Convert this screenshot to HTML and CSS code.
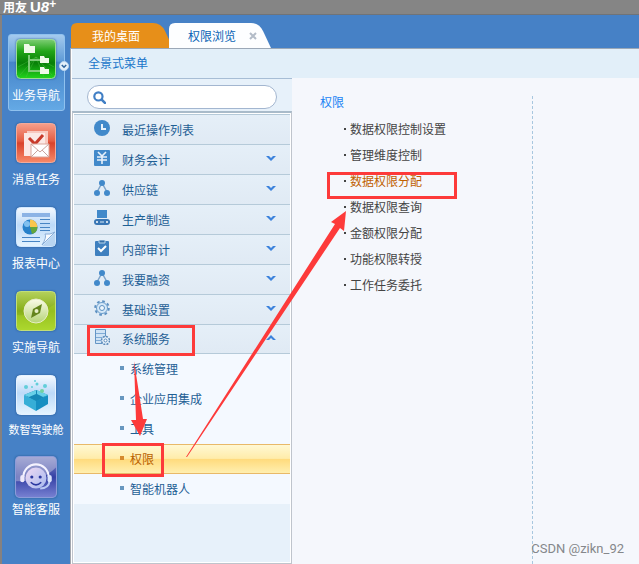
FILE: index.html
```
<!DOCTYPE html>
<html lang="zh-CN">
<head>
  <meta charset="utf-8">
  <title>用友U8+</title>
  <link rel="stylesheet" href="styles.css">
</head>
<body>
<header class="titlebar">用友 <b class="logo">U<i>8</i></b><span class="plus">+</span></header>

<div class="app">
  <nav class="sidebar">
    <a class="nav-item active" href="#">
      <svg class="nav-icon" viewBox="0 0 40 40">
        <defs>
          <linearGradient id="green" x1="0" y1="0" x2="0" y2="1"><stop offset="0" stop-color="#7dce74"/><stop offset=".3" stop-color="#22a518"/><stop offset=".6" stop-color="#087f08"/><stop offset="1" stop-color="#22d51c"/></linearGradient>
        </defs>
        <rect x=".5" y=".5" width="39" height="39" rx="4" fill="url(#green)" stroke="#9bdc94"/>
        <path d="M4 36L20 18L36 36M10 38L20 18L28 38M2 28L20 18L38 28" stroke="#4fc545" stroke-opacity=".4" fill="none"/>
        <path d="M13 16V32H24M13 21H24" stroke="#7ecb78" stroke-width="2" fill="none"/>
        <path d="M8 5h5l1 2h5v7H8zM24 17h4l1 2h4v5h-9zM24 28h4l1 2h4v5h-9z" fill="#effae9"/>
      </svg>
      <span>业务导航</span>
      <svg class="more" viewBox="0 0 10 10"><circle cx="5" cy="5" r="4.5" fill="#e5f0fa" stroke="#b7d3ee"/><path d="M2.8 4L5 6.2L7.2 4" stroke="#31659d" stroke-width="1.6" fill="none"/></svg>
    </a>
    <a class="nav-item" href="#">
      <svg class="nav-icon" viewBox="0 0 40 40">
        <defs>
          <linearGradient id="red" x1="0" y1="0" x2="0" y2="1"><stop offset="0" stop-color="#f6a08c"/><stop offset=".45" stop-color="#e55c42"/><stop offset=".5" stop-color="#d9432c"/><stop offset="1" stop-color="#f88a68"/></linearGradient>
        </defs>
        <rect x=".5" y=".5" width="39" height="39" rx="4" fill="url(#red)" stroke="#f3aa9a"/>
        <path d="M11 8H32V31H11z" fill="#f8c9bf"/>
        <path d="M8 10H29V33H8z" fill="#fbe9e5"/>
        <path d="M13 15L19 21L27 12" stroke="#c83a2a" stroke-width="3" fill="none"/>
        <path d="M15 21H33V34H15z" fill="#fff" stroke="#dba69b"/>
        <path d="M15 21L24 29L33 21M15 34L22 27M33 34L26 27" fill="none" stroke="#c9a49d"/>
      </svg>
      <span>消息任务</span>
    </a>
    <a class="nav-item" href="#">
      <svg class="nav-icon" viewBox="0 0 40 40">
        <defs>
          <linearGradient id="sky" x1="0" y1="0" x2="0" y2="1"><stop offset="0" stop-color="#f4f9ff"/><stop offset=".45" stop-color="#bddaf8"/><stop offset="1" stop-color="#e5f4ff"/></linearGradient>
        </defs>
        <rect x=".5" y=".5" width="39" height="39" rx="4" fill="url(#sky)" stroke="#d2e8ff"/>
        <path d="M6 6H34V10H6z" fill="#8cb3e5"/>
        <circle cx="14" cy="20" r="7.5" fill="#2781ca"/>
        <path d="M14 20V12.500A7.500 7.500 0 0 1 21.500 20z" fill="#fac64d"/>
        <path d="M14 20H21.500A7.500 7.500 0 0 1 16 27z" fill="#64a63b"/>
        <circle cx="11" cy="17" r="3" fill="#7fc0f0"/>
        <path d="M24 12.500H34M24 16.500H34M24 20.500H34M24 23.500H34M6 30.500H24M6 34.500H24" stroke="#4785c4"/>
        <path d="M39 25L26 38Q31 30 29 27Q34 28 39 25z" fill="#f7fbff" stroke="#8aaed8"/>
        <path d="M39 26V37Q39 39 37 39H26z" fill="#b9d5f1"/>
      </svg>
      <span>报表中心</span>
    </a>
    <a class="nav-item" href="#">
      <svg class="nav-icon" viewBox="0 0 40 40">
        <defs>
          <linearGradient id="lime" x1="0" y1="0" x2="0" y2="1"><stop offset="0" stop-color="#b5d15c"/><stop offset=".5" stop-color="#86ae18"/><stop offset="1" stop-color="#b4df38"/></linearGradient>
          <linearGradient id="dial" x1="0" y1="0" x2="0" y2="1"><stop offset="0" stop-color="#fbfbe9"/><stop offset="1" stop-color="#b5d477"/></linearGradient>
        </defs>
        <rect x=".5" y=".5" width="39" height="39" rx="4" fill="url(#lime)" stroke="#c2de77"/>
        <path d="M1 24Q22 26 39 13V36Q39 39 36 39H4Q1 39 1 36z" fill="#a5d126" fill-opacity=".5"/>
        <circle cx="20" cy="20" r="12" fill="url(#dial)" stroke="#e7edc4"/>
        <path d="M26 13L24 22L15 27L17 18z" fill="#64841d"/>
        <circle cx="20.500" cy="20" r="2" fill="#e8efc9"/>
      </svg>
      <span>实施导航</span>
    </a>
    <a class="nav-item small" href="#">
      <svg class="nav-icon" viewBox="0 0 40 40">
        <rect x=".5" y=".5" width="39" height="39" rx="4" fill="url(#sky)" stroke="#e6f2ff"/>
        <path d="M8 20L20 15L32 20L20 27z" fill="#1688b7"/>
        <path d="M8 20L20 26V36L8 29z" fill="#36aed7"/>
        <path d="M32 20L20 26V36L32 29z" fill="#168fc2"/>
        <path d="M8 20L20 15V19L13 22zM32 20L21 15V19L27 22z" fill="#68d0e8"/>
        <g fill="#62ceda"><circle cx="10" cy="12" r="2"/><circle cx="16" cy="12" r="1"/><circle cx="21" cy="9" r="1.500"/><circle cx="29" cy="11" r="2"/><circle cx="19" cy="6" r="1"/><circle cx="26" cy="16" r="2" fill="#72d2a1"/></g>
      </svg>
      <span>数智驾驶舱</span>
    </a>
    <a class="nav-item last" href="#">
      <svg class="nav-icon" viewBox="0 0 40 40">
        <defs>
          <linearGradient id="violet" x1="0" y1="0" x2="0" y2="1"><stop offset="0" stop-color="#8c92cb"/><stop offset=".5" stop-color="#3440a5"/><stop offset="1" stop-color="#7881d2"/></linearGradient>
          <linearGradient id="face" x1="0" y1="0" x2="1" y2="1"><stop offset="0" stop-color="#f0d9f3"/><stop offset="1" stop-color="#a5b9ee"/></linearGradient>
        </defs>
        <rect x=".5" y=".5" width="39" height="39" rx="4" fill="url(#violet)" stroke="#8c9bd8"/>
        <path d="M1 24Q25 25 39 11V4Q39 1 36 1H4Q1 1 1 4z" fill="#c2c4e0" fill-opacity=".5"/>
        <circle cx="20" cy="21" r="10" fill="url(#face)"/>
        <path d="M8 20A12 12 0 0 1 32 20" fill="none" stroke="#f5f3ff" stroke-width="2"/>
        <path d="M33 24Q32 31 24 31" fill="none" stroke="#b9c9f4" stroke-width="2"/>
        <rect x="5" y="18" width="4" height="7" rx="2" fill="#eee9fb"/>
        <rect x="31" y="18" width="4" height="7" rx="2" fill="#dce4fb"/>
        <circle cx="16" cy="20" r="1.500" fill="#2b38a0"/><circle cx="24" cy="20" r="1.500" fill="#2b38a0"/>
        <path d="M15 25Q20 30 25 25" fill="none" stroke="#2b38a0" stroke-width="1.500"/>
      </svg>
      <span>智能客服</span>
    </a>
  </nav>

  <main class="main">
    <div class="tabs">
      <button class="tab">我的桌面</button>
      <button class="tab current">权限浏览
        <svg class="close" viewBox="0 0 8 8"><path d="M1 1L7 7M7 1L1 7" stroke="#b3bcc8" stroke-width="2"/></svg>
      </button>
    </div>

    <div class="workspace">
      <div class="toolbar"><a href="#">全景式菜单</a></div>
      <div class="columns">
        <aside class="menu">
          <label class="search">
            <svg viewBox="0 0 12 12"><circle cx="5" cy="5" r="3.800" fill="none" stroke="#417fc5" stroke-width="2"/><path d="M8 8L11 11" stroke="#417fc5" stroke-width="2.400" stroke-linecap="round"/></svg>
            <input type="text" aria-label="搜索">
          </label>
          <div class="tree">
            <button class="row">
              <svg class="icon" viewBox="0 0 16 16"><circle cx="8" cy="8" r="8" fill="#4189ca"/><path d="M8 4V9H12" stroke="#e7f1fa" stroke-width="2" fill="none"/></svg>
              最近操作列表
            </button>
            <button class="row">
              <svg class="icon" viewBox="0 0 16 16"><rect width="16" height="16" rx="1" fill="#4189ca"/><path d="M4 2L8 6L12 2M3 7H13M3 10H13M8 6V14" stroke="#e7f1fa" stroke-width="1.600" fill="none"/></svg>
              财务会计
              <svg class="arrow" viewBox="0 0 10 6"><path d="M0 0H3L5 2L7 0H10L5 5z"/></svg>
            </button>
            <button class="row">
              <svg class="icon" viewBox="0 0 16 16"><path d="M3 12L8 3L13 12" stroke="#7ea3c8" stroke-width="1.500" fill="none"/><g fill="#4189ca"><circle cx="8" cy="3" r="3"/><circle cx="3" cy="13" r="3"/><circle cx="13" cy="13" r="3"/></g></svg>
              供应链
              <svg class="arrow" viewBox="0 0 10 6"><path d="M0 0H3L5 2L7 0H10L5 5z"/></svg>
            </button>
            <button class="row">
              <svg class="icon" viewBox="0 0 16 16"><path d="M3 0H13V8H3z" fill="#4189ca"/><rect y="9" width="16" height="6" rx="3" fill="#3976b4"/><path d="M6 12H10" stroke="#d9eaf7"/><circle cx="3" cy="12" r="1" fill="#fff"/><circle cx="13" cy="12" r="1" fill="#fff"/></svg>
              生产制造
              <svg class="arrow" viewBox="0 0 10 6"><path d="M0 0H3L5 2L7 0H10L5 5z"/></svg>
            </button>
            <button class="row">
              <svg class="icon" viewBox="0 0 16 16"><rect x="1" y="1" width="14" height="15" rx="1" fill="#3f80bf"/><path d="M5 0H11V3H5z" fill="#356fa8" stroke="#b9d6ed"/><path d="M4 8L7 11L12 6" stroke="#fff" stroke-width="2" fill="none"/></svg>
              内部审计
              <svg class="arrow" viewBox="0 0 10 6"><path d="M0 0H3L5 2L7 0H10L5 5z"/></svg>
            </button>
            <button class="row">
              <svg class="icon" viewBox="0 0 16 16"><path d="M3 12L8 3L13 12" stroke="#7ea3c8" stroke-width="1.500" fill="none"/><g fill="#4189ca"><circle cx="8" cy="3" r="3"/><circle cx="3" cy="13" r="3"/><circle cx="13" cy="13" r="3"/></g></svg>
              我要融资
              <svg class="arrow" viewBox="0 0 10 6"><path d="M0 0H3L5 2L7 0H10L5 5z"/></svg>
            </button>
            <button class="row">
              <svg class="icon" viewBox="0 0 16 16"><circle cx="8" cy="8" r="6.800" fill="none" stroke="#5e91c2" stroke-width="2" stroke-dasharray="2.700 2.640"/><circle cx="8" cy="8" r="5.500" fill="#d5e8f8" stroke="#6b9dcb"/><circle cx="8" cy="8" r="2.500" fill="#eef6fc" stroke="#5e91c2"/></svg>
              基础设置
              <svg class="arrow" viewBox="0 0 10 6"><path d="M0 0H3L5 2L7 0H10L5 5z"/></svg>
            </button>
            <button class="row open">
              <svg class="icon" viewBox="0 0 16 16"><path d="M1.500 .5H11.500V14.500H1.500z" fill="#cfe3f5" stroke="#6495c5"/><path d="M2 4.500H11M2 8.500H11M2 11.500H11" stroke="#7fabd6"/><circle cx="11.500" cy="11.500" r="4" fill="#e6f1fa" stroke="#5a89b9" stroke-width="1.500" stroke-dasharray="2 1.140"/><circle cx="11.500" cy="11.500" r="1.500" fill="#fff" stroke="#5a89b9"/></svg>
              系统服务
              <svg class="arrow" viewBox="0 0 10 6"><path d="M0 5H3L5 3L7 5H10L5 0z"/></svg>
            </button>
            <ul class="submenu">
              <li><a href="#">系统管理</a></li>
              <li><a href="#">企业应用集成</a></li>
              <li><a href="#">工具</a></li>
              <li class="selected"><a href="#">权限</a></li>
              <li><a href="#">智能机器人</a></li>
            </ul>
          </div>
        </aside>

        <section class="panel">
          <div class="group">
            <h2>权限</h2>
            <ul>
              <li><a href="#">数据权限控制设置</a></li>
              <li><a href="#">管理维度控制</a></li>
              <li><a class="hot" href="#">数据权限分配</a></li>
              <li><a href="#">数据权限查询</a></li>
              <li><a href="#">金额权限分配</a></li>
              <li><a href="#">功能权限转授</a></li>
              <li><a href="#">工作任务委托</a></li>
            </ul>
          </div>
        </section>
      </div>
    </div>
  </main>
</div>

<!-- red marks drawn over the window -->
<svg class="marks" width="639" height="564" viewBox="0 0 639 564">
  <g fill="none" stroke="#fd3a3a" stroke-width="3">
    <rect x="88.500" y="326.500" width="105" height="28"/>
    <rect x="103.500" y="444.500" width="59" height="31"/>
    <rect x="328.500" y="173.500" width="127" height="24"/>
  </g>
  <g fill="#fd3a3a">
    <path d="M134 361L143 419L147 419L140 436L131 420L136 420z"/>
    <path d="M186 457L335 224L331 222L346 211L344 231L340 228L187 457z"/>
  </g>
</svg>
<div class="watermark">CSDN @zikn_92</div>
</body>
</html>
```
FILE: styles.css
```
* {
  box-sizing: border-box;
}

body {
  margin: 0;
  height: 100vh;
  display: flex;
  flex-direction: column;
  overflow: hidden;
  font: 12px/16px "Noto Sans CJK SC", sans-serif;
}

a {
  color: inherit;
  text-decoration: none;
}

ul {
  list-style: none;
  margin: 0;
  padding: 0;
}

button {
  border: 0;
  font: inherit;
  cursor: pointer;
}

.titlebar {
  display: flex;
  gap: 3px;
  flex: none;
  height: 15px;
  padding-left: 3px;
  background: #858585;
  border-bottom: 1px solid #6f7378;
  color: #fff;
  font-weight: bold;
  line-height: 13px;
}

.logo {
  font: bold 15px/13px "Liberation Sans", sans-serif;
}

.plus {
  margin-left: -3px;
  font: bold 12px/8px "Liberation Sans", sans-serif;
}

.app {
  display: flex;
  flex: 1;
  min-height: 0;
  border-left: 2px solid #858180;
  background: #4681c6;
}

/* left icon bar */
.sidebar {
  display: flex;
  flex-direction: column;
  align-items: center;
  gap: 7px;
  width: 68px;
  padding-top: 19px;
}

.nav-item {
  position: relative;
  display: flex;
  flex-direction: column;
  align-items: center;
  gap: 8px;
  flex: none;
  width: 57px;
  height: 77px;
  padding-top: 4px;
  border: 1px solid transparent;
  border-radius: 3px;
  color: #fff;
  white-space: nowrap;
}

.nav-item.active {
  border-color: #8fc1ee;
  background: linear-gradient(#a4caee, #5e9ad6 35%, #4684c9 36%, #64a9e5);
}

.nav-item.small {
  gap: 6px;
  font-size: 11px;
}

.nav-icon {
  width: 40px;
  height: 40px;
  border-radius: 4px;
  box-shadow: 0 0 2px #25558c;
}

.nav-item.last {
  gap: 3px;
  padding-top: 1px;
}

.last .nav-icon {
  width: 42px;
  height: 42px;
}

.more {
  position: absolute;
  top: 26px;
  right: -5px;
  width: 10px;
}

.main {
  display: flex;
  flex-direction: column;
  flex: 1;
  min-width: 0;
}

.tabs {
  display: flex;
  height: 33px;
  padding: 8px 0 0 1px;
}

.tab {
  display: flex;
  align-items: center;
  gap: 13px;
  width: 102px;
  height: 25px;
  padding: 0 0 0 21px;
  background: #e78f19;
  color: #fff;
  clip-path: path("M0 25V6Q0 0 6 0H82Q90 0 94 8L102 25Z");
}

.tab.current {
  margin-left: -4px;
  padding-left: 19px;
  background: #fdfeff;
  color: #0863b5;
}

.close {
  width: 8px;
}

.workspace {
  display: flex;
  flex-direction: column;
  flex: 1;
  min-height: 0;
  border-top: 1px solid #9ba8b7;
  border-left: 1px solid #a2a7af;
  padding-left: 1px;
  background: #fff;
}

.toolbar {
  flex: none;
  height: 29px;
  padding: 6px 16px;
  background: #e2eff9;
  color: #1975c9;
}

.columns {
  display: flex;
  flex: 1;
  min-height: 0;
}

/* tree menu */
.menu {
  display: flex;
  flex-direction: column;
  width: 220px;
  border-top: 1px solid #a7bdd5;
  background: #e7f1fa;
}

.search {
  display: flex;
  align-items: center;
  gap: 6px;
  flex: none;
  height: 24px;
  margin: 6px 15px 2px;
  padding: 0 8px 0 5px;
  border: 1px solid #a3b6d0;
  border-radius: 12px;
  background: #fff;
}

.search svg {
  flex: none;
  width: 13px;
}

.search input {
  flex: 1;
  min-width: 0;
  border: 0;
  outline: 0;
  background: none;
  font: inherit;
}

.tree {
  flex: 1;
  padding: 1px;
  border: 1px solid #bfc4cc;
  border-top: 2px solid #a9bbca;
  background: #e7f1fa;
  box-shadow: inset 0 0 0 1px #fff;
}

.row {
  display: flex;
  align-items: center;
  gap: 12px;
  width: 100%;
  height: 30px;
  padding: 0 14px 0 20px;
  border-top: 1px solid #b5cad9;
  background: linear-gradient(#e5eff8, #e0eaf4);
  color: #1f6095;
}

.row.open {
  border-bottom: 1px solid #b5cad9;
}

.icon {
  width: 16px;
  height: 16px;
  margin-bottom: 4px;
}

.arrow {
  width: 10px;
  margin-left: auto;
  margin-bottom: 2px;
  fill: #3c82dc;
}

.submenu {
  background: #f4f9ff;
  color: #1f6095;
}

.submenu li {
  display: flex;
  align-items: center;
  gap: 6px;
  height: 30px;
  padding-left: 46px;
  border: solid transparent;
  border-width: 1px 0;
}

.submenu li::before {
  content: "";
  width: 4px;
  height: 4px;
  margin-bottom: 2px;
  background: #6797bf;
}

.submenu .selected {
  border-color: #e8b969;
  background: linear-gradient(#fff8d3, #ffecaa 48%, #ffda7c 50%, #ffefb0);
  color: #b86000;
}

.submenu .selected::before {
  background: #d5892e;
}

/* functions of the selected node */
.panel {
  flex: 1;
  padding-top: 18px;
  background: #f5f7fc;
}

.group {
  width: 241px;
  height: 100%;
  padding-left: 28px;
  border-right: 1px dashed #a8c7df;
}

.group h2 {
  margin: 0 0 8px;
  color: #1a83f4;
  font-size: 12px;
  font-weight: normal;
  line-height: 12px;
}

.group li {
  display: flex;
  align-items: center;
  gap: 4px;
  padding-left: 24px;
  line-height: 26px;
  color: #444;
}

.group li::before {
  content: "";
  width: 2px;
  height: 2px;
  background: #444;
}

.group .hot {
  color: #c06000;
}

.marks {
  position: absolute;
  top: 0;
  left: 0;
  pointer-events: none;
}

.watermark {
  position: absolute;
  right: 15px;
  bottom: 7px;
  color: #85878b;
  font: 13px/16px Roboto, sans-serif;
}
```
